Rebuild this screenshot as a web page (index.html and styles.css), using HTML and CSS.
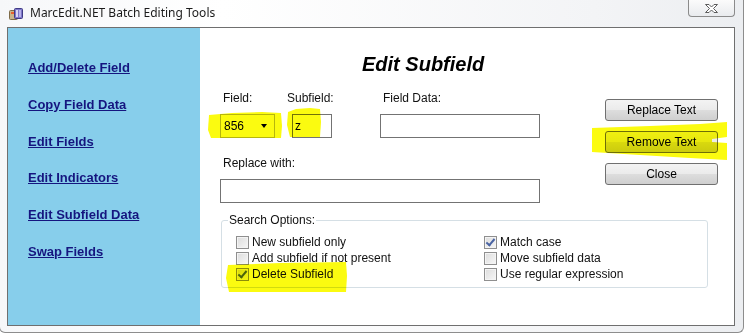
FILE: index.html
```
<!DOCTYPE html>
<html lang="en">
<head>
    <meta charset="UTF-8">
    <title>MarcEdit.NET Batch Editing Tools</title>
    <link rel="stylesheet" href="styles.css">
</head>
<body>
    <div class="window">
        <div class="titlebar">
            <svg class="app-icon" width="15" height="13" viewBox="0 0 15 13">
                <rect x="0.5" y="3.5" width="8" height="9" rx="1" fill="#c9b48a" stroke="#7d6a48"/>
                <rect x="5.5" y="1.5" width="8" height="10" rx="1" fill="#7f78c9" stroke="#3f3a85"/>
                <rect x="7" y="3" width="2" height="7" fill="#d9d5f5"/>
                <rect x="10" y="3" width="2" height="7" fill="#b7b1ea"/>
                <rect x="2" y="5" width="3" height="2" fill="#e8602c"/>
            </svg>
            <span class="title">MarcEdit.NET Batch Editing Tools</span>
            <div class="close-btn">
                <svg width="15" height="11" viewBox="0 0 15 11">
                    <path d="M1.5 1.5 H5 L7.5 4 L10 1.5 H13.5 L9.5 5.5 L13.5 9.5 H10 L7.5 7 L5 9.5 H1.5 L5.5 5.5 Z" fill="#ffffff" stroke="#5c5c5c" stroke-width="1" stroke-linejoin="round"/>
                </svg>
            </div>
        </div>

        <div class="client">
            <nav class="sidebar">
                <a href="#">Add/Delete Field</a>
                <a href="#">Copy Field Data</a>
                <a href="#">Edit Fields</a>
                <a href="#">Edit Indicators</a>
                <a href="#">Edit Subfield Data</a>
                <a href="#">Swap Fields</a>
            </nav>

            <div class="editor">
                <h1>Edit Subfield</h1>

                <div class="top-row">
                    <div class="fields">
                        <div class="field-row">
                            <div class="field-col col-field">
                                <span class="lbl">Field:</span>
                                <div class="combo">
                                    <span>856</span>
                                    <span class="arrow"></span>
                                </div>
                            </div>
                            <div class="field-col col-sub">
                                <span class="lbl">Subfield:</span>
                                <div class="textbox sub-box">z</div>
                            </div>
                            <div class="field-col col-data">
                                <span class="lbl">Field Data:</span>
                                <div class="textbox data-box"></div>
                            </div>
                        </div>
                        <span class="lbl replace-lbl">Replace with:</span>
                        <div class="textbox replace-box"></div>
                    </div>

                    <div class="buttons">
                        <button class="btn">Replace Text</button>
                        <button class="btn">Remove Text</button>
                        <button class="btn">Close</button>
                    </div>
                </div>

                <fieldset class="options">
                    <legend>Search Options:</legend>
                    <div class="opt-grid">
                        <div class="opt"><span class="check"></span>New subfield only</div>
                        <div class="opt"><span class="check"></span>Add subfield if not present</div>
                        <div class="opt"><span class="check checked"></span>Delete Subfield</div>
                        <div class="opt"><span class="check checked"></span>Match case</div>
                        <div class="opt"><span class="check"></span>Move subfield data</div>
                        <div class="opt"><span class="check"></span>Use regular expression</div>
                    </div>
                </fieldset>
            </div>
        </div>

        <!-- highlighter marks drawn over the screenshot -->
        <svg class="highlights" width="744" height="335" viewBox="0 0 744 335">
            <path d="M209 115 L232 113 L262 112 L281 113 L282 126 L281 138 L250 138 L211 138 L208 130 Z"/>
            <path d="M288 112 L296 109 L310 108 L320 109 L321 122 L320 137 L300 137 L290 137 L287 125 Z"/>
            <path d="M592 128 L650 126 L700 124 L727 122 L727 137 L712 139 L712 142 L727 143 L727 160 L690 158 L640 155 L592 152 Z"/>
            <path d="M228 265 L280 263 L346 262 L347 276 L346 292 L300 292 L229 292 L226 278 Z"/>
        </svg>
    </div>
</body>
</html>
```

FILE: styles.css
```
/* General */
body {
    margin: 0;
    background-color: #ffffff;
    font-family: 'Liberation Sans', Arial, sans-serif;
    color: #000;
}

/* Window frame */
.window {
    position: relative;
    width: 743px;
    height: 332px;
    margin-left: -1px;
    border-left: 1px solid #8d8d8d;
    border-right: 1px solid #8d8d8d;
    border-bottom: 1px solid #8d8d8d;
    border-radius: 0 0 6px 6px;
    background: linear-gradient(to right, #f6f7f9 0%, #ffffff 30%, #f3f4f6 80%, #eceef1 100%);
    overflow: hidden;
}

.titlebar {
    display: flex;
    align-items: center;
    height: 27px;
    padding-left: 9px;
}

.app-icon {
    margin-right: 6px;
    margin-top: -1px;
}

.title {
    font-family: 'Noto Sans', sans-serif;
    font-size: 12px;
    color: #1b1b1b;
    margin-top: -2px;
}

.close-btn {
    display: flex;
    align-items: center;
    justify-content: center;
    margin-left: auto;
    margin-right: 8px;
    align-self: flex-start;
    width: 47px;
    height: 17px;
    border: 1px solid #8b8b8b;
    border-top: none;
    border-radius: 0 0 4px 4px;
    background: linear-gradient(#fbfbfb, #e9ebee);
    box-sizing: border-box;
}

/* Client area */
.client {
    display: flex;
    width: 728px;
    height: 299px;
    margin-left: 7px;
    border: 1px solid #6f6f6f;
    box-sizing: border-box;
    background-color: #ffffff;
}

.sidebar {
    display: flex;
    flex-direction: column;
    gap: 21.8px;
    width: 192px;
    padding: 32px 0 0 20px;
    box-sizing: border-box;
    background-color: #87ceeb;
}

.sidebar a {
    font-size: 13px;
    line-height: 15px;
    font-weight: bold;
    color: #15157f;
    text-decoration: underline;
}

/* Editor area */
.editor {
    flex: 1;
    padding: 24px 16px 0 20px;
}

h1 {
    margin: 0 0 0 142px;
    font-size: 20px;
    line-height: 24px;
    font-weight: bold;
    font-style: italic;
}

.top-row {
    display: flex;
    align-items: flex-start;
    margin-top: 15px;
}

.fields {
    display: flex;
    flex-direction: column;
    width: 320px;
}

.field-row {
    display: flex;
    align-items: flex-start;
}

.field-col {
    display: flex;
    flex-direction: column;
}

.lbl {
    font-size: 12px;
    line-height: 14px;
    white-space: nowrap;
    color: #111;
}

.field-col .lbl {
    margin-bottom: 9px;
}

.col-field {
    width: 55px;
}

.col-field .lbl,
.col-data .lbl {
    padding-left: 3px;
}

.col-sub {
    width: 40px;
    margin-left: 17px;
}

.col-sub .lbl {
    margin-left: -5px;
}

.col-data {
    width: 160px;
    margin-left: 48px;
}

.combo {
    display: flex;
    align-items: center;
    width: 55px;
    height: 24px;
    padding: 0 5px 0 3px;
    border: 1px solid #b9b9b9;
    box-sizing: border-box;
    font-size: 12px;
}

.combo .arrow {
    margin-left: auto;
    margin-right: 2px;
    border-left: 3.5px solid transparent;
    border-right: 3.5px solid transparent;
    border-top: 4px solid #000;
}

.textbox {
    height: 24px;
    border: 1px solid #737373;
    box-sizing: border-box;
    font-size: 12px;
    line-height: 22px;
    padding-left: 2px;
    background-color: #fff;
}

.sub-box {
    width: 40px;
}

.data-box {
    width: 160px;
}

.replace-lbl {
    margin: 18px 0 9px 3px;
}

.replace-box {
    width: 320px;
}

/* Buttons */
.buttons {
    display: flex;
    flex-direction: column;
    gap: 10px;
    margin: 8px 0 0 auto;
}

.btn {
    width: 113px;
    height: 22px;
    padding: 0;
    border: 1px solid #707070;
    border-radius: 3px;
    background: linear-gradient(#f3f3f3 0%, #ebebeb 48%, #dddddd 52%, #cfcfcf 100%);
    font-family: 'Liberation Sans', Arial, sans-serif;
    font-size: 12px;
    color: #000;
}

/* Search options group */
.options {
    width: 487px;
    margin: 10px 0 0 1px;
    padding: 0 0 5px 6px;
    border: 1px solid #d5dfe5;
    border-radius: 3px;
    box-sizing: border-box;
}

.options legend {
    padding: 0 1px;
    font-size: 12px;
    line-height: 14px;
    color: #111;
}

.opt-grid {
    display: grid;
    grid-template-columns: 248px 1fr;
    grid-template-rows: repeat(3, 16px);
    grid-auto-flow: column;
    margin: 7px 0 0 8px;
}

.opt {
    display: flex;
    align-items: center;
    font-size: 12px;
    color: #111;
}

.check {
    position: relative;
    width: 13px;
    height: 13px;
    margin-right: 3px;
    border: 1px solid #8f8f8f;
    box-sizing: border-box;
    background: linear-gradient(135deg, #dcdcdc, #f7f7f7);
    box-shadow: inset 0 0 0 1px #f4f4f4;
}

.check.checked::after {
    content: "";
    position: absolute;
    left: 3px;
    top: 0px;
    width: 3px;
    height: 7px;
    border-right: 2px solid #4a64a3;
    border-bottom: 2px solid #4a64a3;
    transform: rotate(40deg);
}

/* Highlighter overlay */
.highlights {
    position: absolute;
    left: 0;
    top: 0;
    pointer-events: none;
    mix-blend-mode: multiply;
}

.highlights path {
    fill: #fbfb10;
}
```
